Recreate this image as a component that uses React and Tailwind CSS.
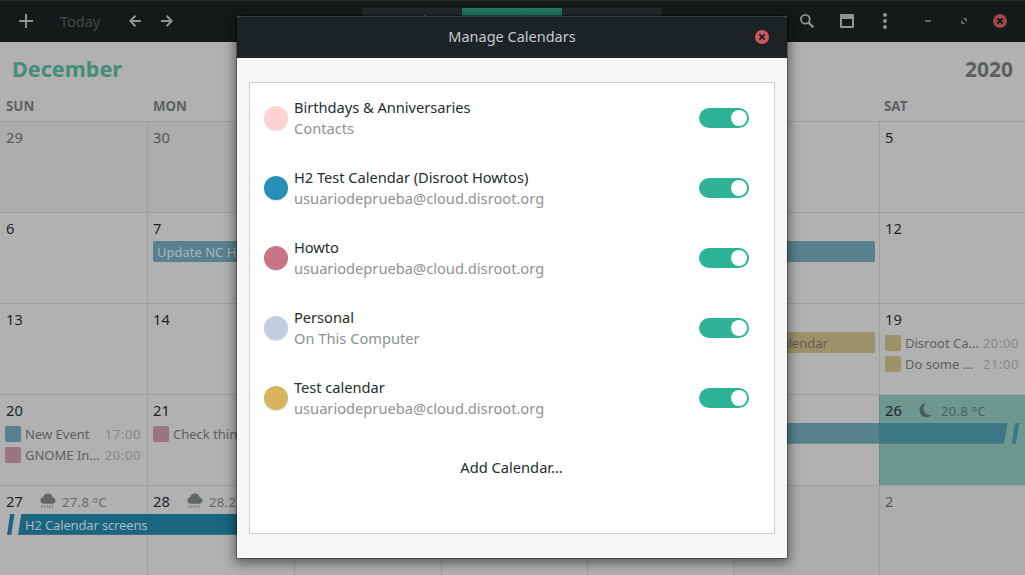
import React from 'react';

const COLS = 'grid grid-cols-[147px_147px_147px_146px_146px_146px_146px]';

const RainIcon = () => (
  <svg width="16" height="16" viewBox="0 0 16 16" fill="#616767">
    <path d="M3.2 10.8A3.3 3.3 0 0 1 3.1 4.3 5 5 0 0 1 12.8 4.4 3.25 3.25 0 0 1 12.8 10.8Z" />
    <path d="M2.6 12 1.4 15M5.2 12 4 15M7.8 12 6.6 15M10.4 12 9.2 15M13 12 11.8 15" stroke="#6a7070" strokeWidth="1" strokeDasharray="1.7 .5" fill="none" />
  </svg>
);

const MoonIcon = () => (
  <svg width="16" height="16" viewBox="0 0 16 16" fill="#46605c">
    <path d="M7.2 1A7.1 7.1 0 1 0 13 12.6 6.6 6.6 0 0 1 7.2 1Z" />
  </svg>
);

const CloseIcon = ({ fill, mark }) => (
  <svg width="14" height="14" viewBox="0 0 14 14">
    <circle cx="7" cy="7" r="7" fill={fill} />
    <path d="M4.4 4.4 9.6 9.6M9.6 4.4 4.4 9.6" stroke={mark} strokeWidth="1.9" />
  </svg>
);

const WEEKS = [
  { days: [29, 30, 1, 2, 3, 4, 5], other: [0, 1] },
  {
    days: [6, 7, 8, 9, 10, 11, 12],
    bars: [{ label: 'Update NC Howtos', cls: 'col-start-2 col-end-7 ml-1.5 mr-1 rounded-xs bg-[#58818f] pl-1 pt-px text-[#a9b7bb]' }],
  },
  {
    days: [13, 14, 15, 16, 17, 18, 19],
    bars: [{ label: 'Test calendar', cls: 'col-start-6 col-end-7 ml-1.5 mr-1 rounded-xs bg-[#9d916c] pl-2 pt-px text-[#5f5f57]' }],
    events: {
      6: [
        { t: 'Disroot Ca…', time: '20:00', c: 'bg-[#9d916c]' },
        { t: 'Do some …', time: '21:00', c: 'bg-[#9d916c]' },
      ],
    },
  },
  {
    days: [20, 21, 22, 23, 24, 25, 26],
    today: 6,
    weather: { 6: ['moon', '20.8 ºC'] },
    events: {
      0: [
        { t: 'New Event', time: '17:00', c: 'bg-[#58818f]' },
        { t: 'GNOME In…', time: '20:00', c: 'bg-[#9b747d]' },
      ],
      1: [{ t: 'Check things', time: '', c: 'bg-[#9b747d]' }],
    },
    bars: [
      { label: '', cls: 'col-start-4 col-end-7 bg-[#58818f] border-b border-[#748b92]' },
      {
        label: '',
        cls: 'col-start-7 col-end-8 bg-[#3d7886] border-b border-[#547f80] [clip-path:polygon(0_0,128.5px_0,125px_100%,0_100%)]',
      },
      {
        label: '',
        cls: 'col-start-7 col-end-8 bg-[#3d7886] border-b border-[#547f80] [clip-path:polygon(136px_0,140.3px_0,136.8px_100%,132.5px_100%)]',
      },
    ],
  },
  {
    days: [27, 28, 29, 30, 31, 1, 2],
    other: [5, 6],
    weather: { 0: ['rain', '27.8 ºC'], 1: ['rain', '28.2 ºC'] },
    bars: [
      {
        label: '',
        cls: 'col-start-1 col-end-2 bg-[#1a6580] border-b border-[#436f7f] [clip-path:polygon(10.2px_0,14.5px_0,11.2px_100%,7px_100%)]',
      },
      {
        label: 'H2 Calendar screens',
        cls: 'col-start-1 col-end-6 bg-[#1a6580] border-b border-[#436f7f] pl-[25px] pt-px tracking-[-0.15px] text-[#a5bbc3] [clip-path:polygon(21.3px_0,100%_0,100%_100%,18px_100%)]',
      },
    ],
  },
];

function Event({ e }) {
  return (
    <div className="flex h-[21px] items-center whitespace-nowrap">
      <span className={'h-4 w-4 shrink-0 rounded-xs ' + e.c} />
      <span className="ml-1 flex-1 text-[13px] leading-5 text-[#5b6061]">{e.t}</span>
      {e.time && <span className="ml-1 text-[13px] leading-5 tracking-[0.6px] text-[#858889]">{e.time}</span>}
    </div>
  );
}

function Week({ w }) {
  return (
    <div className={COLS + ' h-[91px] shrink-0 grid-rows-[28px_21px_minmax(0,1fr)] border-t border-[#9f9f9f]'}>
      {w.days.map((d, i) => {
        const other = w.other?.includes(i);
        const weather = w.weather?.[i];
        return (
          <div
            key={i}
            style={{ gridColumn: i + 1 }}
            className={
              'row-start-1 row-end-4 flex min-w-0 flex-col overflow-hidden pl-[5px] pr-1.5 ' +
              (i ? 'border-l ' : '') +
              (w.today === i ? 'border-[#658983] bg-[#6e9790] ' : 'border-[#9f9f9f] ') +
              (other ? 'bg-[#adadad]' : '')
            }
          >
            <div className="flex h-7 shrink-0 items-center pt-0.5">
              <span className={'text-[14.67px] leading-5 ' + (i ? 'w-[34px] ' : 'w-[35px] pl-px ') + (other ? 'text-[#53595a]' : 'text-[#1d2627]')}>{d}</span>
              {weather && (
                <>
                  {weather[0] === 'rain' ? <RainIcon /> : <MoonIcon />}
                  <span className={'ml-1.5 mt-px whitespace-nowrap text-[13px] leading-5 tracking-[0.35px] ' + (w.today === i ? 'text-[#48625e]' : 'text-[#646868]')}>
                    {weather[1]}
                  </span>
                </>
              )}
            </div>
            {w.events?.[i]?.map((e, k) => <Event key={k} e={e} />)}
          </div>
        );
      })}
      {w.bars?.map((b, i) => (
        <div key={i} className={'row-start-2 overflow-hidden whitespace-nowrap text-[13px] leading-5 ' + b.cls}>
          {b.label}
        </div>
      ))}
    </div>
  );
}

const CALENDARS = [
  ['Birthdays & Anniversaries', 'Contacts', 'bg-[#fcd3d1]'],
  ['H2 Test Calendar (Disroot Howtos)', 'usuariodeprueba@cloud.disroot.org', 'bg-[#268fb8]'],
  ['Howto', 'usuariodeprueba@cloud.disroot.org', 'bg-[#c77487]'],
  ['Personal', 'On This Computer', 'bg-[#bfcddf]'],
  ['Test calendar', 'usuariodeprueba@cloud.disroot.org', 'bg-[#d9b45f]'],
];

function Dialog() {
  return (
    <div className="absolute left-[237px] top-4 flex h-[542px] w-[550px] flex-col rounded-t-[3px] bg-[#f7f7f7] shadow-[0_0_0_1px_rgba(0,0,0,0.3),0_3px_12px_2px_rgba(0,0,0,0.5)]">
      <div className="grid h-[42px] shrink-0 grid-cols-[1fr_auto_1fr] items-center rounded-t-[3px] border-t border-[#363c3e] bg-[#1c2325] px-[18px] pb-[2px]">
        <span />
        <span className="mb-0.5 text-[14.5px] leading-5 text-[#c5c9ca]">Manage Calendars</span>
        <span className="justify-self-end">
          <CloseIcon fill="#cd575f" mark="#1c2325" />
        </span>
      </div>
      <div className="mx-3 my-6 min-h-0 flex-1 border border-[#cfd0d0] bg-white">
        {CALENDARS.map(([name, sub, color]) => (
          <div key={name} className="flex h-[70px] items-center pl-3.5 pr-[25px]">
            <span className={'h-6 w-6 rounded-full shadow-[0_1px_1px_rgba(0,0,0,0.12)] ' + color} />
            <div className="ml-1.5 flex-1 text-[14.67px] leading-[21px]">
              <div className="tracking-[-0.03px] text-[#242d2f]">{name}</div>
              <div className="text-[#8d9293]">{sub}</div>
            </div>
            <span className="flex h-5 w-[50px] items-center justify-end rounded-full bg-[#2fb398] pr-0.5">
              <span className="h-4 w-4 rounded-full bg-white" />
            </span>
          </div>
        ))}
        <div className="flex h-[68px] items-center justify-center pr-px text-[14.67px] leading-5 text-[#242d2f]">Add Calendar…</div>
      </div>
    </div>
  );
}

function HeaderBar() {
  return (
    <div className="grid h-[42px] shrink-0 grid-cols-[362px_300px_1fr] border-t border-[#262d2e] bg-[#141919]">
      <div className="flex items-center pb-px pl-[19px]">
        <svg width="14" height="14" viewBox="0 0 14 14" stroke="#8f9393" strokeWidth="2">
          <path d="M7 0V14M0 7H14" />
        </svg>
        <span className="mb-px ml-[27px] w-[69px] text-[14.5px] leading-5 text-[#434949]">Today</span>
        <svg width="12" height="12" viewBox="0 0 12 12" stroke="#8f9393" strokeWidth="2" fill="none">
          <path d="M12 6H1.5M6.4 .8 1.3 6 6.4 11.2" />
        </svg>
        <svg className="ml-5" width="12" height="12" viewBox="0 0 12 12" stroke="#8f9393" strokeWidth="2" fill="none">
          <path d="M0 6H10.5M5.6 .8 10.7 6 5.6 11.2" />
        </svg>
      </div>
      <div className="mt-[7px] grid h-7 grid-cols-3 overflow-hidden rounded-[3px] bg-[#232a2d] text-center text-[14.67px] leading-6 text-[#8f9393]">
        <span>Week</span>
        <span className="bg-[#217c69]">Month</span>
        <span>Year</span>
      </div>
      <div className="flex items-center justify-end pb-px pr-[18px]">
        <svg width="14" height="14" viewBox="0 0 14 14" stroke="#8f9393" fill="none">
          <circle cx="5.3" cy="5.3" r="4.4" strokeWidth="1.8" />
          <path d="M8.6 8.6 13.3 13.3" strokeWidth="2.2" />
        </svg>
        <svg className="ml-[26px]" width="14" height="14" viewBox="0 0 14 14">
          <path fillRule="evenodd" d="M1 0H13Q14 0 14 1V13Q14 14 13 14H1Q0 14 0 13V1Q0 0 1 0ZM2 5V12H12V5Z" fill="#8f9393" />
        </svg>
        <svg className="ml-[29px]" width="4" height="16" viewBox="0 0 4 16" fill="#8f9393">
          <circle cx="2" cy="2" r="2" />
          <circle cx="2" cy="8" r="2" />
          <circle cx="2" cy="14" r="2" />
        </svg>
        <span className="ml-[38px] h-0.5 w-1.5 bg-[#626666]" />
        <svg className="ml-[30px]" width="6" height="6" viewBox="0 0 6 6" fill="#5c6060">
          <path d="M1.6 0H6V4.4ZM0 1.6 4.4 6H0Z" />
        </svg>
        <span className="ml-[26px]">
          <CloseIcon fill="#a04449" mark="#141919" />
        </span>
      </div>
    </div>
  );
}

export default function App() {
  return (
    <div className="relative flex h-[575px] w-[1025px] flex-col overflow-hidden bg-[#b1b1b1] font-['Noto_Sans',sans-serif]">
      <HeaderBar />
      <div className="flex h-[54px] shrink-0 items-center justify-between px-3 text-[21.6px] font-bold leading-8">
        <span className="text-[#438d7b]">December</span>
        <span className="text-[21px] text-[#5b6060]">2020</span>
      </div>
      <div className={COLS + ' h-[25px] shrink-0 text-[13.33px] font-bold leading-5 text-[#5d6262]'}>
        {['SUN', 'MON', 'TUE', 'WED', 'THU', 'FRI', 'SAT'].map((d, i) => (
          <span key={d} className={i === 6 ? 'pl-[5px]' : 'pl-1.5'}>{d}</span>
        ))}
      </div>
      {WEEKS.map((w, i) => <Week key={i} w={w} />)}
      <Dialog />
    </div>
  );
}
